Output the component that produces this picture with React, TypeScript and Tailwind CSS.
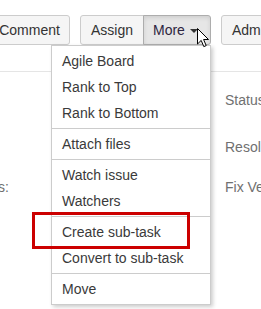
import React from 'react';

const groups: string[][] = [
  ['Agile Board', 'Rank to Top', 'Rank to Bottom'],
  ['Attach files'],
  ['Watch issue', 'Watchers'],
  ['Create sub-task', 'Convert to sub-task'],
  ['Move'],
];

// Mouse pointer drawn over the More button
const Cursor = () => (
  <svg width="13" height="20" viewBox="0 0 13 20" className="absolute left-[197px] top-[28px]">
    <path
      d="M0.5 0.5 L0.5 16 L4.2 12.4 L6.8 18.6 L9.2 17.6 L6.6 11.5 L11.5 11.5 Z"
      fill="#fff"
      stroke="#000"
      strokeWidth="1"
      strokeLinejoin="miter"
    />
  </svg>
);

export default function App() {
  return (
    <div className="relative w-[261px] h-[309px] overflow-hidden bg-white font-['Liberation_Sans',Arial,sans-serif] text-[14px] text-[#333]">
      {/* toolbar */}
      <div className="flex items-start h-[72px] pt-[15px] border-b border-[#e5e5e5] -ml-[11px] w-[283px]">
        <button className="h-[30px] w-[81px] shrink-0 rounded-[3px] border border-[#ccc] bg-[#f5f5f5] text-[#333] leading-[28px] text-center">
          Comment
        </button>
        <div className="flex ml-[10px] shrink-0">
          <button className="h-[30px] w-[64px] rounded-l-[3px] border border-[#ccc] bg-[#f5f5f5] text-[#333] leading-[28px] text-center">
            Assign
          </button>
          <button className="h-[30px] w-[68px] -ml-px rounded-r-[3px] border border-[#adadad] bg-[#e6e6e6] shadow-[inset_0_2px_4px_rgba(0,0,0,0.1)] text-[#2d2540] leading-[28px] flex items-center pl-[9px]">
            More
            <span className="ml-[5px] mt-[1px] w-0 h-0 border-l-[4px] border-r-[4px] border-t-[4px] border-l-transparent border-r-transparent border-t-[#333]" />
          </button>
        </div>
        <button className="ml-[10px] h-[30px] w-[70px] shrink-0 rounded-[3px] border border-[#ccc] bg-[#f5f5f5] text-[#333] leading-[28px] text-left pl-[10px]">
          Admin
        </button>
      </div>

      {/* details behind the menu */}
      <div className="flex text-[#707070] leading-[16px]">
        <div className="-ml-[100px] w-[109px] shrink-0 text-right whitespace-nowrap">
          <div className="mt-[107px]">Components:</div>
        </div>
        <div className="ml-[216px] shrink-0 whitespace-nowrap">
          <div className="mt-[20px]">Status:</div>
          <div className="mt-[31px]">Resolution:</div>
          <div className="mt-[24px]">Fix Version/s:</div>
        </div>
      </div>

      {/* dropdown menu */}
      <div className="absolute left-[51px] top-[45px] w-[160px] bg-white border border-[#ccc] shadow-[2px_2px_4px_rgba(0,0,0,0.2)]">
        {groups.map((g, i) => (
          <ul key={i} className={`py-[2px] ${i > 0 ? 'border-t border-[#ccc]' : ''}`}>
            {g.map((item) => (
              <li key={item} className="h-[26px] leading-[26px] pl-[10px] text-[#3a3a3a] whitespace-nowrap">
                {item}
              </li>
            ))}
          </ul>
        ))}
      </div>

      {/* highlight box */}
      <div className="absolute left-[32px] top-[212px] w-[158px] h-[37px] border-[3px] border-[#cc0000]" />

      <Cursor />
    </div>
  );
}
